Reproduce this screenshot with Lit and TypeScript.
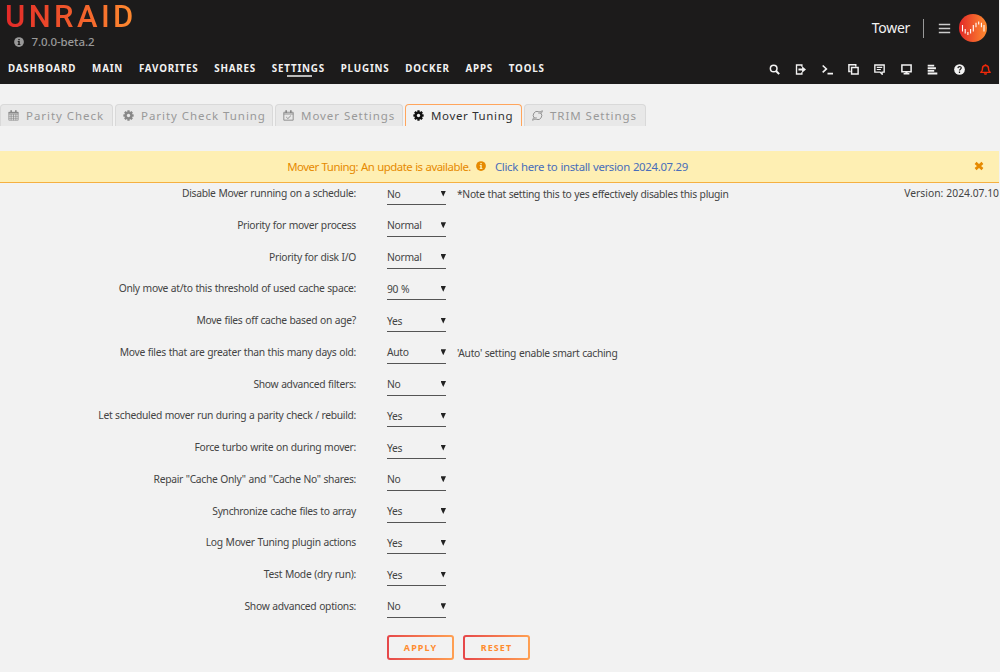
import { html, svg, LitElement, css, nothing, SVGTemplateResult } from "lit";
import { customElement, property } from "lit/decorators.js";
import { classMap } from "lit/directives/class-map.js";
import { styleMap } from "lit/directives/style-map.js";

const cogTeeth = [0, 45, 90, 135].map(
  (a) => svg`<rect x="6.2" y="0.5" width="3.6" height="15" rx="0.6" transform="rotate(${a} 8 8)"/>`,
);

const icons: Record<string, SVGTemplateResult> = {
  search: svg`<g fill="none" stroke="currentColor"><circle cx="6.8" cy="6.5" r="4.8" stroke-width="2.2"/><path d="M10.3 10.2l4.5 4.5" stroke-width="3"/></g>`,
  logout: svg`<path d="M10 4V1.5H2.2v13H10V12" fill="none" stroke="currentColor" stroke-width="2"/><path d="M5 6.5h5.3V3.4L16 8l-5.7 4.6V9.5H5z"/>`,
  terminal: svg`<path d="M1 2.2l5.4 5L1 12.2M8 14h8" fill="none" stroke="currentColor" stroke-width="2.3"/>`,
  copy: svg`<path d="M11.3 3.5V1.2H1.3V11h2.4M5.2 5.2h9.5v9.4H5.2z" fill="none" stroke="currentColor" stroke-width="2.1"/>`,
  comment: svg`<path d="M1.2 1.5h13.6v10.3h-3v3l-3-3H1.2z" fill="none" stroke="currentColor" stroke-width="2"/><path d="M4 4.9h8M4 8h6" stroke="currentColor" stroke-width="1.7"/>`,
  monitor: svg`<path d="M1.3 1.5h13.4v9.7H1.3z" fill="none" stroke="currentColor" stroke-width="2.2"/><path d="M6.4 11h3.2v2.2h2.6v2H3.8v-2h2.6z"/>`,
  log: svg`<path d="M1 1h9.5v2.8H1zM1 4.8h12v2.8H1zM1 8.6h9.5v2.8H1zM1 12.4h14v2.8H1z"/>`,
  help: svg`<circle cx="8" cy="8" r="7.8"/><path d="M5.7 6c.1-3.2 5-3 4.8-.2C10.4 7.5 8 7.6 8 9.6M8 11v2" fill="none" stroke="#1c1b1b" stroke-width="1.8"/>`,
  bell: svg`<path d="M1.2 12.2C4 10 3.400 8.500 3.600 6.600a4.400 4.400 0 0 1 8.800 0C12.600 8.500 12 10 14.800 12.200z" fill="none" stroke="currentColor" stroke-width="2.1" stroke-linejoin="round"/><path d="M6.9.3h2.2v2.2H6.9zM5.6 13.3h4.8c0 3.2-4.8 3.2-4.8 0z"/>`,
  info: svg`<circle cx="8" cy="8" r="7.8"/><path d="M6.9 3h2.3v2.1H6.9zM6 6.5h3.2V11h1v1.7H5.9V11h1V8.1H6z" fill="var(--icon-hole, #1c1b1b)"/>`,
  calendar: svg`<path d="M1.2 3.3h13.6v11.5H1.2zM1 6.2h14M1 9.1h14M1 12h14M4.6 6v9M8 6v9M11.4 6v9" fill="none" stroke="currentColor" stroke-width="1"/><path d="M1 3h14v2H1zM3.4.4h2.4v4H3.4zM10.2.4h2.4v4h-2.4z"/>`,
  cog: svg`${cogTeeth}<circle cx="8" cy="8" r="5.6"/><circle cx="8" cy="8" r="2.4" fill="var(--icon-hole)"/>`,
  calendarCheck: svg`<path d="M1.2 3.3h13.6v11.5H1.2zM1 5.8h14M4.7 10.2l2.4 2.3 4.4-4.3" fill="none" stroke="currentColor" stroke-width="1.3"/><path d="M3.4.4h2.4v4H3.4zM10.2.4h2.4v4h-2.4z"/>`,
  trim: svg`<path d="M3.4 11.8A5.8 5.8 0 0 1 9.5 2.3C11.500 2.700 13.500 2.300 15 1c.2 1.800-.7 3-2 3.400H9M12.6 4.200A5.8 5.8 0 0 1 6.500 13.700C4.500 13.300 2.500 13.700 1 15c-.2-1.800.7-3 2-3.400h4" fill="none" stroke="currentColor" stroke-width="1.3"/>`,
  close: svg`<path d="M2.5 3l11 10M13.5 3l-11 10" fill="none" stroke="currentColor" stroke-width="4.4"/>`,
  menu: svg`<path d="M1 3h14M1 8h14M1 13h14" fill="none" stroke="currentColor" stroke-width="1.7"/>`,
};

@customElement("ur-icon")
export class UrIcon extends LitElement {
  static styles = css`
    :host {
      display: inline-flex;
      flex: none;
      width: 11px;
      height: 11px;
    }

    svg {
      display: block;
      width: 100%;
      height: 100%;
      fill: currentColor;
    }
  `;

  @property({ type: String })
  name: string = "";

  render() {
    return html`<svg viewBox="0 0 16 16">${icons[this.name] ?? nothing}</svg>`;
  }
}

@customElement("ur-header")
export class UrHeader extends LitElement {
  static styles = css`
    :host {
      display: flex;
      flex-direction: column;
      box-sizing: border-box;
      height: 84px;
      margin-right: 1px;
      background: #1c1b1b;
      color: #f2f2f2;
    }

    .top {
      display: flex;
      justify-content: space-between;
      height: 54px;
    }

    .brand {
      padding-left: 5px;
    }

    .logo {
      width: max-content;
      height: 33px;
      font: 500 31px/33px Roboto, sans-serif;
      letter-spacing: 3.4px;
      color: transparent;
      background: linear-gradient(90deg, #e22828, #ff8c2f);
      background-clip: text;
      -webkit-background-clip: text;
    }

    .version {
      display: flex;
      align-items: center;
      gap: 7.5px;
      height: 17px;
      padding-left: 9px;
      font-size: 11.5px;
      font-weight: 500;
      letter-spacing: -0.1px;
      color: #999;
    }

    .version ur-icon {
      width: 10px;
      height: 10px;
    }

    .server {
      display: flex;
      align-items: center;
      height: 56px;
      padding-right: 12px;
      font-size: 14px;
      letter-spacing: -0.3px;
    }

    .name {
      margin-top: -2px;
    }

    .divider {
      width: 1px;
      height: 19px;
      margin: 0 14px 0 13px;
      background: #999;
    }

    .menu {
      width: 13px;
      height: 13px;
      margin-right: 8px;
      color: #ccc;
    }

    .avatar {
      width: 28px;
      height: 28px;
    }

    .nav {
      display: flex;
      justify-content: space-between;
      height: 30px;
      padding: 0 8px 0 8px;
    }

    .links,
    .tools {
      display: flex;
      align-items: center;
    }

    .links {
      gap: 15.8px;
      font-size: 9.8px;
      font-weight: 700;
      letter-spacing: 0.8px;
    }

    .link {
      position: relative;
      line-height: 30px;
    }

    .link.active::after {
      content: "";
      position: absolute;
      left: 15px;
      bottom: 7px;
      width: 25px;
      height: 2px;
      background: #bbb;
    }

    .tools {
      gap: 15.4px;
    }

    .alert {
      color: #f0280a;
    }
  `;

  private links = ["DASHBOARD", "MAIN", "FAVORITES", "SHARES", "SETTINGS", "PLUGINS", "DOCKER", "APPS", "TOOLS"];

  private tools = ["search", "logout", "terminal", "copy", "comment", "monitor", "log", "help", "bell"];

  render() {
    return html`
      <div class="top">
        <div class="brand">
          <div class="logo">UNRAID</div>
          <div class="version"><ur-icon name="info"></ur-icon>7.0.0-beta.2</div>
        </div>
        <div class="server">
          <span class="name">Tower</span>
          <span class="divider"></span>
          <ur-icon class="menu" name="menu"></ur-icon>
          <svg class="avatar" viewBox="0 0 28 28">
            <defs>
              <linearGradient id="g">
                <stop offset="0" stop-color="#e22828" />
                <stop offset="1" stop-color="#ff8c2f" />
              </linearGradient>
            </defs>
            <circle cx="14" cy="14" r="14" fill="url(#g)" />
            <path
              d="M3.5 11v6.5M6.2 15v4.5M8.9 18v3M11.6 15v4.5M14.3 11v6.5M17 8.8v4.5M19.7 7.5v3M22.4 8.8v4.5M25 11v6.5"
              stroke="#fff"
              stroke-width="1.1"
            />
          </svg>
        </div>
      </div>
      <div class="nav">
        <div class="links">
          ${this.links.map(
            (l) => html`<span class=${classMap({ link: true, active: l === "SETTINGS" })}>${l}</span>`,
          )}
        </div>
        <div class="tools">
          ${this.tools.map(
            (t) => html`<ur-icon class=${classMap({ alert: t === "bell" })} name=${t}></ur-icon>`,
          )}
        </div>
      </div>
    `;
  }
}

interface Tab {
  icon: string;
  label: string;
  width: number;
  active?: boolean;
}

@customElement("ur-tabs")
export class UrTabs extends LitElement {
  static styles = css`
    :host {
      display: flex;
      gap: 2px;
      height: 22px;
      padding-top: 20px;
    }

    .tab {
      display: flex;
      align-items: center;
      box-sizing: border-box;
      height: 22px;
      gap: 7px;
      padding-left: 7px;
      border: 1px solid #d9d9d9;
      border-bottom: none;
      border-radius: 4px 4px 0 0;
      background: #e8e8e8;
      color: #999;
      font-size: 11.5px;
      letter-spacing: 0.95px;
      white-space: nowrap;
      --icon-hole: #e8e8e8;
    }

    .tab.active {
      border-color: #ffa55c;
      background: #f2f2f2;
      color: #303030;
      letter-spacing: 0.65px;
      --icon-hole: #f2f2f2;
    }

    ur-icon {
      color: #888;
    }

    .active ur-icon {
      color: #111;
    }
  `;

  private tabs: Tab[] = [
    { icon: "calendar", label: "Parity Check", width: 113 },
    { icon: "cog", label: "Parity Check Tuning", width: 158 },
    { icon: "calendarCheck", label: "Mover Settings", width: 128 },
    { icon: "cog", label: "Mover Tuning", width: 117, active: true },
    { icon: "trim", label: "TRIM Settings", width: 122 },
  ];

  render() {
    return this.tabs.map(
      (t) => html`
        <div class=${classMap({ tab: true, active: !!t.active })} style=${styleMap({ width: `${t.width}px` })}>
          <ur-icon name=${t.icon}></ur-icon>${t.label}
        </div>
      `,
    );
  }
}

interface Setting {
  label: string;
  value: string;
  note?: string;
}

const settings: Setting[] = [
  {
    label: "Disable Mover running on a schedule:",
    value: "No",
    note: "*Note that setting this to yes effectively disables this plugin",
  },
  { label: "Priority for mover process", value: "Normal" },
  { label: "Priority for disk I/O", value: "Normal" },
  { label: "Only move at/to this threshold of used cache space:", value: "90 %" },
  { label: "Move files off cache based on age?", value: "Yes" },
  {
    label: "Move files that are greater than this many days old:",
    value: "Auto",
    note: "'Auto' setting enable smart caching",
  },
  { label: "Show advanced filters:", value: "No" },
  { label: "Let scheduled mover run during a parity check / rebuild:", value: "Yes" },
  { label: "Force turbo write on during mover:", value: "Yes" },
  { label: 'Repair "Cache Only" and "Cache No" shares:', value: "No" },
  { label: "Synchronize cache files to array", value: "Yes" },
  { label: "Log Mover Tuning plugin actions", value: "Yes" },
  { label: "Test Mode (dry run):", value: "Yes" },
  { label: "Show advanced options:", value: "No" },
];

@customElement("ur-settings")
export class UrSettings extends LitElement {
  static styles = css`
    :host {
      display: block;
      font-size: 10.3px;
      letter-spacing: -0.3px;
      word-spacing: 0.4px;
      color: #444;
    }

    .row {
      display: grid;
      grid-template-columns: 356px 59px 1fr auto;
      height: 31.75px;
      line-height: 20px;
      white-space: nowrap;
    }

    .label {
      text-align: right;
    }

    .select {
      display: flex;
      justify-content: space-between;
      box-sizing: border-box;
      height: 22px;
      margin-left: 31px;
      width: 59px;
      padding-top: 0.6px;
      border-bottom: 1px solid #555;
    }

    .arrow {
      width: 5.5px;
      height: 6px;
      margin-top: 7px;
      background: #222;
      clip-path: polygon(0 0, 100% 0, 50% 100%);
    }

    .note {
      padding: 1px 0 0 42px;
    }

    .plugin-version {
      padding-right: 1px;
      letter-spacing: 0;
    }

    .buttons {
      display: flex;
      gap: 9px;
      padding: 7px 0 0 387px;
    }

    .button {
      box-sizing: border-box;
      width: 67px;
      height: 25px;
      border: 2px solid transparent;
      border-radius: 3px;
      background:
        linear-gradient(#f2f2f2, #f2f2f2) padding-box,
        linear-gradient(90deg, #e6474a, #ffa052) border-box;
      color: #ff8c2f;
      font: 700 9px/21px "Noto Sans", sans-serif;
      letter-spacing: 1.1px;
      text-align: center;
    }
  `;

  render() {
    return html`
      ${settings.map(
        (s, i) => html`
          <div class="row">
            <span class="label">${s.label}</span>
            <span class="select">${s.value}<span class="arrow"></span></span>
            <span class="note">${s.note ?? nothing}</span>
            ${i === 0 ? html`<span class="plugin-version">Version: 2024.07.10</span>` : nothing}
          </div>
        `,
      )}
      <div class="buttons">
        <div class="button">APPLY</div>
        <div class="button">RESET</div>
      </div>
    `;
  }
}

@customElement("app-root")
export class AppRoot extends LitElement {
  static styles = css`
    :host {
      display: block;
      box-sizing: border-box;
      width: 1000px;
      height: 672px;
      overflow: hidden;
      background: #f2f2f2;
      font-family: "Noto Sans", sans-serif;
    }

    .banner {
      display: grid;
      grid-template-columns: 1fr auto 1fr;
      align-items: center;
      box-sizing: border-box;
      height: 32px;
      margin: 25px 1px 0 0;
      padding: 0 15px 1px 0;
      border-bottom: 1px solid #f5b041;
      background: #feefb3;
      color: #e68a00;
      font-size: 11.4px;
      letter-spacing: -0.48px;
      word-spacing: 0.4px;
      --icon-hole: #feefb3;
    }

    .message {
      display: flex;
      grid-column: 2;
      align-items: center;
      padding-right: 9px;
      white-space: nowrap;
    }

    .message ur-icon {
      width: 10px;
      height: 10px;
      margin: 0 9px 0 5px;
    }

    .install {
      color: #486dba;
      letter-spacing: -0.33px;
    }

    .close {
      justify-self: end;
      width: 10px;
      height: 10px;
    }
  `;

  render() {
    return html`
      <ur-header></ur-header>
      <ur-tabs></ur-tabs>
      <div class="banner">
        <div class="message">
          Mover Tuning: An update is available.
          <ur-icon name="info"></ur-icon>
          <span class="install">Click here to install version 2024.07.29</span>
        </div>
        <ur-icon class="close" name="close"></ur-icon>
      </div>
      <ur-settings></ur-settings>
    `;
  }
}

declare global {
  interface HTMLElementTagNameMap {
    "app-root": AppRoot;
    "ur-icon": UrIcon;
    "ur-header": UrHeader;
    "ur-tabs": UrTabs;
    "ur-settings": UrSettings;
  }
}
